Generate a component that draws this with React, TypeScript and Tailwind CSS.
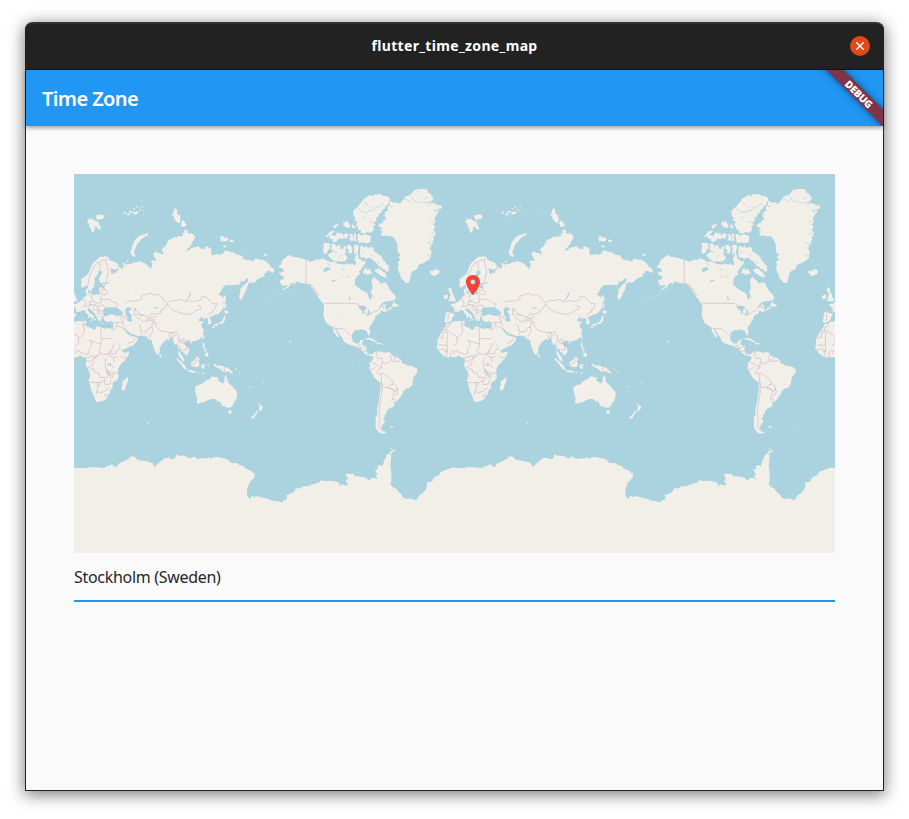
import React from "react";

const PERIOD = 1135;

function Eurasia() {
  return (
    <g>
      <path d="M-21 417L-14 414 -4 417 5 418 7 408 4 401 -2 396 -5 391 3 389 9 389 10 384 15 386 19 381 25 377 29 369 36 366 38 361 35 355 34 348 39 344 44 341 45 346 42 352 43 358 48 362 54 361 59 364 69 361 74 362 77 357 74 350 75 343 80 338 85 343 91 344 89 337 85 335 87 331 98 331 102 328 92 326 83 328 77 325 75 315 78 306 85 297 84 291 77 290 73 294 71 303 64 309 61 316 64 323 60 327 61 338 55 344 51 352 47 352 42 343 41 335 37 333 30 339 24 341 21 334 23 325 21 317 26 311 35 306 43 298 47 290 50 281 54 270 61 263 66 260 71 254 77 250 83 247 88 250 92 245 98 248 104 249 102 254 112 260 124 264 132 271 134 279 127 287 114 285 107 281 110 287 111 297 117 302 119 295 127 298 129 290 134 286 133 280 139 278 142 285 149 280 150 273 146 267 151 266 156 273 163 269 172 270 178 265 189 265 193 261 202 263 211 267 217 271 223 277 229 285 233 279 236 270 231 264 236 257 241 262 247 259 241 249 238 239 245 232 252 237 258 236 267 243 268 234 262 228 266 221 273 219 275 212 281 206 280 202 289 196 295 194 302 188 310 190 316 185 322 188 328 183 324 178 332 176 330 168 335 166 342 172 341 179 351 178 358 180 364 190 359 199 354 206 349 217 339 226 336 231 345 229 354 221 365 219 373 217 381 224 391 226 395 217 404 220 412 224 411 234 413 243 420 244 428 240 437 242 447 239 451 230 463 230 467 234 477 235 485 239 491 244 497 243 505 247 510 256 518 259 526 258 533 261 541 263 540 256 548 254 558 257 569 258 577 263 585 270 590 279 597 282 602 291 596 298 589 292 580 290 577 296 569 301 573 307 564 309 557 313 549 317 544 324 536 326 527 325 521 332 519 341 516 350 510 360 506 371 500 379 497 374 495 366 499 357 498 347 504 340 510 333 518 327 523 319 522 312 513 317 509 323 500 320 499 328 493 334 485 332 475 334 463 333 455 334 448 339 442 347 438 357 431 360 440 365 448 369 450 378 449 388 450 397 445 408 437 416 431 421 422 422 414 427 405 431 410 437 413 446 407 451 401 449 402 441 401 433 394 431 389 436 385 435 387 428 379 431 375 438 376 443 384 441 389 444 382 451 383 459 389 468 388 478 388 486 380 492 374 497 365 500 359 502 350 503 343 499 335 503 330 508 336 515 343 521 346 530 342 540 334 545 331 537 324 534 321 526 316 523 316 532 321 541 327 548 331 560 328 563 320 554 315 545 312 539 314 530 311 520 308 510 302 513 299 504 297 494 292 491 287 497 279 495 272 502 264 509 260 517 257 523 258 532 253 541 250 543 244 535 239 522 235 508 233 497 226 498 220 492 216 486 204 485 191 487 184 483 176 481 168 476 160 471 153 463 149 461 154 471 161 479 164 485 169 479 171 486 178 487 185 489 192 492 189 501 184 507 179 514 166 518 155 524 142 529 139 521 134 511 126 498 120 487 116 479 114 471 117 463 118 454 118 446 112 441 104 444 96 443 91 439 88 432 89 427 81 427 84 432 81 441 76 442 71 436 66 426 61 417 54 410 48 405 42 401 40 407 44 413 51 419 57 423 61 428 56 434 54 441 48 441 54 436 52 430 43 423 36 416 32 409 26 408 18 413 9 413 5 418 8 424 1 428 0 436 -5 443 -13 445 -18 448 -24 444 -22 432 -20 424z M89 426L98 424 105 421 115 420 125 424 140 425 148 419 143 411 131 403 124 400 110 400 93 401 87 408 89 416z" />
      <path d="M-11 381L-1 382 9 382 10 376 5 369 4 362 -1 354 -2 346 -6 339 -11 343 -11 351 -7 358 -5 364 -10 370 -7 375 -14 381zM-26 376L-15 374 -13 365 -17 361 -25 366zM58 436L67 434 65 440zM82 447L91 448 84 450zM42 423L46 422 47 431 42 432zM109 448L116 446 113 450zM46 357L52 355 53 361 48 362zM-52 0" />
      <path d="M40 140L49 131 52 138 57 133 60 141 64 139 70 145 71 137 65 128 68 122 77 123 83 120 91 127 87 134 77 136 71 140 75 150 81 163 78 167 70 163 66 155 63 160 61 170 57 178 52 170 50 163 45 158 47 150 40 146zM149 112L157 116 151 121zM158 119L166 117 168 122 161 125zM165 110L175 111 174 116 166 116zM177 112L185 115 190 110 193 116 185 122 177 120zM186 96L193 99 189 103zM195 104L202 109 198 112zM176 104L183 102 184 107zM200 98L206 97 205 101zM206 107L210 108 209 112zM170 124L176 126 173 129z" />
      <path d="M220 176L223 182 213 188 203 194 197 203 190 209 186 219 182 229 180 238 184 244 185 249 177 247 169 239 170 232 173 225 176 213 180 203 188 193 194 187 203 183 213 181zM300 106L306 103 310 111 309 119 317 124 319 134 318 145 314 148 306 142 301 134 299 127 294 124 298 117zM327 138L333 146 338 154 330 159 321 158 323 151 320 147zM439 187L447 186 450 191 460 190 462 198 455 203 447 200 440 204zM466 196L478 199 480 203 468 204zM449 212L457 216 455 221 448 218zM568 240L578 240 581 244 572 246zM158 260L163 260 163 265 158 265zM145 270L148 266 148 275zM105 123L110 122 110 125zM253 110L257 110 257 113z" />
      <path d="M450 364L455 365 456 377 452 386 458 394 454 399 456 405 450 401 451 390 449 378zM450 411L459 409 464 414 459 420 452 417zM452 422L454 433 451 443 444 449 435 450 428 455 420 457 419 452 428 449 438 446 445 440 448 431zM414 457L420 456 422 461 417 464zM424 453L430 452 428 457zM386 485L391 484 389 496 385 492zM348 504L355 504 352 510zM257 537L262 544 261 550 256 547z" />
      <path d="M385 508L391 507 391 519 399 528 395 530 387 521zM393 539L402 534 404 547 398 549 392 544zM388 527L394 532 394 538zM304 550L312 554 322 563 332 573 339 584 336 588 328 582 319 569 310 559zM339 588L350 588 363 591 369 595 356 596 342 592zM349 566L357 562 364 555 371 547 378 556 373 562 377 569 373 579 364 579 353 576zM381 573L390 571 397 570 389 575 394 585 389 581 387 587 383 582zM417 571L425 569 429 576 437 574 449 577 462 582 469 588 479 598 471 598 461 592 451 595 444 592 439 585 426 580zM369 595L378 595 375 598zM383 596L394 594 387 600zM402 569L405 572 403 578zM483 582L489 586 485 588zM492 590L500 595 497 596zM523 633L533 641 530 643zM565 625L572 620 568 627zM648 505L652 507 650 508z" />
    </g>
  );
}

function Africa() {
  return (
    <g>
      <path d="M-18 449L-9 449 0 444 14 441 24 442 36 440 37 447 35 453 41 459 50 461 58 467 65 465 67 458 75 457 83 462 95 464 105 462 113 464 117 470 114 474 119 484 125 496 131 508 136 518 143 528 146 534 155 536 165 532 165 540 159 551 151 561 142 569 135 578 131 589 133 601 133 611 129 619 120 623 115 630 117 640 109 649 107 658 100 669 94 677 85 681 75 683 66 684 63 676 59 663 53 653 50 640 46 628 43 622 47 610 49 602 45 592 40 583 35 575 37 562 36 550 28 551 18 544 12 549 3 550 -6 549 -15 551 -25 546 -34 539 -40 530 -47 521 -44 511 -45 500 -42 490 -35 480 -29 467 -21 459z" />
      <path d="M160 608L163 619 158 630 153 647 145 650 142 641 146 632 144 623 153 617z" />
    </g>
  );
}

function Oceania() {
  return (
    <path d="M364 638L373 633 385 630 390 624 400 617 407 616 411 609 419 607 426 610 434 610 432 619 439 624 446 629 451 622 451 611 454 602 459 612 462 625 467 630 474 636 481 644 488 652 490 663 487 676 480 687 474 698 464 702 454 698 445 697 440 687 437 682 431 683 425 676 416 674 403 678 392 684 379 686 371 689 368 685 370 674 366 661 363 651zM463 709L472 710 473 716 469 721 463 717zM553 686L559 692 567 699 563 708 558 712 554 708 557 700zM549 709L552 715 545 723 541 731 534 735 530 731 540 722 546 715zM221 744L226 745 225 749 221 748z" />
  );
}

function NorthAmerica() {
  return (
    <g transform="translate(570 0)">
      <path d="M45 296L53 294 62 291 56 288 57 283 47 282 43 276 49 272 53 271 51 266 56 257 64 252 69 246 78 243 84 248 91 248 97 250 107 252 117 255 127 257 136 261 139 265 145 260 152 261 155 256 163 258 170 255 176 251 179 256 187 257 191 262 200 264 208 262 216 266 225 271 233 270 241 272 248 268 258 272 265 268 269 274 274 272 276 264 271 257 276 244 280 239 284 246 284 254 292 257 296 264 303 259 305 267 298 276 291 286 285 293 289 300 279 306 273 318 273 333 282 340 293 349 304 354 311 358 314 368 317 377 323 372 323 362 320 353 325 346 326 336 322 326 325 313 334 313 344 320 350 329 358 326 366 325 372 336 378 348 386 357 394 365 396 373 391 379 380 381 369 382 358 385 351 392 344 400 350 398 358 391 365 392 363 400 368 405 364 411 374 405 378 399 385 402 380 406 369 411 361 415 351 409 349 417 340 423 334 427 333 436 326 443 325 449 319 455 315 461 318 469 318 478 315 486 311 480 308 471 299 468 293 466 284 469 276 468 268 474 264 482 263 492 266 501 274 508 282 509 287 505 290 498 299 497 295 505 294 512 303 515 308 519 306 528 310 537 317 541 326 540 331 540 326 547 317 545 309 544 301 538 295 531 289 525 280 521 272 515 261 513 252 510 242 505 237 498 235 491 228 484 223 475 217 466 213 464 218 473 223 482 225 491 219 488 214 479 208 473 209 466 203 458 195 452 187 447 183 438 179 428 178 417 180 406 180 394 176 387 171 380 164 372 158 361 152 355 149 347 143 340 135 332 124 329 114 327 104 325 99 322 91 331 86 335 90 326 81 328 75 338 66 344 58 348 52 350 62 342 72 335 65 333 56 336 50 330 47 320 58 315 61 308 50 304z" />
      <path d="M342 155L350 148 358 146 356 140 364 138 365 129 357 125 366 122 360 117 368 112 372 107 370 99 377 93 376 85 381 80 387 86 397 85 406 89 411 86 417 76 423 77 421 70 428 66 437 63 443 60 447 52 457 46 467 46 475 45 486 46 492 50 491 56 501 59 502 65 508 70 508 75 501 82 494 86 505 84 509 90 516 88 521 95 529 93 535 99 530 105 524 105 524 114 519 120 514 128 511 138 515 143 508 151 514 160 508 168 514 175 513 184 507 190 511 198 505 203 506 213 497 209 503 218 495 222 502 230 501 242 500 251 493 258 485 263 477 268 468 270 462 275 462 282 455 288 446 291 441 299 439 309 436 320 433 328 425 327 418 319 411 313 409 303 404 293 401 282 404 271 401 263 409 258 404 249 410 240 402 236 400 226 401 213 397 203 392 194 385 187 373 187 363 184 355 186 350 178 358 173 347 169 356 164 349 160z" />
      <path d="M268 108L274 105 276 101 283 98 287 89 295 82 299 74 309 69 316 63 327 66 333 60 341 62 349 59 358 66 367 66 374 69 379 77 374 84 372 92 365 95 363 103 354 108 354 115 345 119 344 127 336 132 338 140 330 145 335 153 327 156 330 164 325 174 317 176 310 173 302 179 290 176 291 167 283 168 281 158 275 152 281 144 272 139 274 131 268 125zM280 180L287 180 292 185 305 181 320 186 320 204 308 208 297 205 285 207 281 199zM184 188L192 181 196 174 205 170 213 170 207 177 198 183 190 189zM207 156L216 151 225 151 218 158 211 164zM195 187L201 181 210 187 216 182 221 173 228 179 233 176 236 183 242 190 235 196 226 193 220 200 213 205 205 201 207 196 198 194zM238 141L246 146 248 138 256 150 259 158 253 162 245 160 238 152zM263 150L272 155 274 163 265 163zM239 181L248 178 253 183 250 192 245 195 240 189zM255 181L261 179 267 186 268 200 260 200 255 194 260 189zM269 178L275 179 276 202 270 201z" />
      <path d="M178 207L191 207 200 210 196 216 201 221 193 227 191 235 182 241 177 232 179 220zM201 211L210 208 217 217 225 213 231 218 228 223 237 226 240 215 246 218 244 229 247 235 241 240 249 246 250 255 242 260 248 264 240 262 232 263 225 262 214 263 205 257 196 250 191 242 200 237 208 231 200 227 204 221zM249 214L257 212 264 218 265 231 261 239 252 236 255 229 249 224zM269 213L283 212 284 222 281 232 281 243 275 238 270 243 271 230zM289 217L296 215 301 221 307 216 313 223 320 218 328 221 330 233 338 235 341 241 349 244 356 252 355 258 363 262 367 270 375 276 373 284 376 288 368 295 363 287 355 284 347 275 344 279 351 287 358 293 365 299 369 311 360 309 350 305 341 298 335 293 331 288 341 284 346 282 341 272 334 264 327 259 321 253 313 251 306 255 298 250 290 252 288 239zM299 288L306 281 311 289 316 284 321 292 325 301 318 299 310 304 304 297 297 302zM327 309L334 307 332 313z" />
      <path d="M498 290L507 292 512 287 521 286 528 293 523 300 511 306 502 303 502 297 496 296zM383 397L387 388 392 381 393 389 401 391 404 399 394 397 388 400zM302 496L312 491 323 493 335 500 343 505 335 505 324 500 315 497zM338 507L349 506 353 510 340 511zM321 510L326 510 324 513zM354 509L361 510 357 512zM76 498L81 503 79 507 76 504zM155 354L161 358 164 366 157 361zM149 342L153 350 149 347z" />
      <path d="M79 344q-25 22-79 32" fill="none" stroke="#d8e3df" strokeWidth="2" strokeDasharray="7 5" />
    </g>
  );
}

function SouthAmerica() {
  return (
    <path
      transform="translate(570 438)"
      d="M318 107L327 101 331 97 338 94 342 96 345 93 353 96 364 98 374 96 380 99 385 107 393 110 402 113 409 116 413 123 414 130 422 132 431 137 441 137 450 141 458 145 461 153 457 162 449 170 447 179 446 189 443 198 436 204 426 206 419 212 416 221 410 229 404 238 398 245 389 246 391 256 386 262 375 264 373 271 366 273 368 280 362 286 362 293 356 297 363 303 359 311 354 317 352 325 358 332 367 338 358 341 347 339 337 328 334 316 336 302 334 293 340 281 339 266 343 253 345 240 346 227 349 215 349 201 349 188 340 181 331 173 325 162 320 152 315 145 318 137 316 130 323 124 328 116 325 104z M378 320L386 318 389 322 381 324zM453 332L458 335 456 337zM282 129L286 130 284 133z"
    />
  );
}

function Antarctica() {
  return (
    <g>
      <path d="M-4 881L5 881 16 883 28 882 41 881 50 878 57 880 68 880 80 882 92 881 99 876 107 875 111 871 118 873 118 877 128 880 131 873 136 868 145 864 156 859 162 854 166 855 166 849 174 847 184 849 187 855 195 859 205 860 216 861 226 864 235 868 241 879 247 874 255 866 262 861 268 855 276 852 285 851 293 856 304 853 305 844 308 841 313 845 320 845 332 845 342 851 351 853 360 847 364 850 368 854 377 854 390 853 401 853 405 850 411 855 417 850 431 849 443 852 454 854 463 857 468 865 479 868 489 867 496 873 508 876 513 882 524 888 532 890 536 896 543 898 541 910 534 918 526 926 522 939 519 947 519 963 524 972 531 974 531 966 541 968 551 967 563 970 574 973 584 975 595 980 608 981 624 985 631 979 640 974 644 963 651 963 661 962 667 965 674 945 683 940 692 936 702 937 711 932 726 928 737 925 741 916 744 920 755 921 762 920 778 922 792 925 798 933 801 938 802 931 811 933 820 936 820 927 815 921 822 913 815 905 817 899 828 900 840 899 841 907 853 907 866 909 877 911 884 920 893 912 903 912 912 917 907 910 904 904 911 903 908 896 904 889 913 884 909 878 917 873 925 877 929 866 930 857 935 854 936 845 944 839 950 837 947 844 952 841 951 858 949 876 951 889 952 902 952 919 949 931 956 939 967 944 973 953 981 960 988 971 998 975 1011 973 1019 977 1028 978 1035 965 1045 958 1055 948 1059 937 1059 925 1068 924 1076 921 1078 912 1088 906 1095 904 1101 893 1110 890 1122 885 1133 883 1139 881 1139 1142 -4 1142zM637 963L647 960 660 954 666 942 700 950 680 974 640 974z" />
      <path d="M945 836L955 829 967 827 957 833 950 839zM901 882L905 885 902 889zM948 825L959 820 953 826z" />
    </g>
  );
}

function InlandWater() {
  return (
    <g fill="#aad3df">
      <path d="M90 416L93 409 98 405 105 407 107 412 112 414 119 411 125 412 134 417 136 424 128 426 119 422 108 421 100 425 92 427 88 423zM118 405L128 402 131 405 124 408 123 412 118 409zM154 404L160 400 170 401 174 405 168 409 164 412 169 419 173 424 172 434 176 439 171 443 162 442 158 438 161 430 156 423 154 414z" />
      <path d="M180 403L185 402 186 408 182 409zM239 400L254 400 252 403 240 403zM334 377L342 371 349 355 352 357 347 369 338 378zM320 440L324 441 323 443zM98 326L105 323 105 329zM108 318L111 320 110 323zM159 358L164 358 163 360zM323 335L331 336 324 337zM100 570L112 567 110 573 102 575z" />
      <g transform="translate(570 0)">
        <path d="M177 289L183 282 192 279 200 284 197 289 190 290 185 295 179 292zM205 319L214 317 220 318 212 321 204 325 203 324zM281 398L290 395 302 396 310 403 303 406 300 418 295 424 296 411 290 407zM310 405L315 407 319 419 312 417 312 410zM306 422L318 418 319 421 308 425zM254 366L259 370 260 380 255 375zM216 423L219 426 216 427zM232 307L239 307 235 310z" />
        <g fill="none" stroke="#aad3df" strokeWidth="2">
          <path d="M282 104L296 114 308 116 317 110 327 110 335 99 348 97 360 86M300 84L312 93M318 103L326 96M332 149L324 143 316 144M295 134L303 127M377 97L386 99M426 75L440 84M441 67L450 80 462 85M468 82L479 87 493 84 506 88M490 70L482 76M459 51L466 58M502 85L492 97M524 106L510 110 519 114M507 144L499 144M509 177L499 181M500 208L489 206M498 247L488 243M207 232L219 236M232 243L223 249M292 239L301 233M319 240L328 247M340 264L349 269M408 243L399 247M190 268L201 275M231 285L240 290M322 364L330 368M247 306L258 311" />
        </g>
      </g>
    </g>
  );
}

function Borders() {
  return (
    <g fill="none" stroke="#c9afc4" strokeWidth="2.4" strokeOpacity=".7" strokeLinejoin="round">
      <path d="M42 334L44 317 48 303 55 291 59 278 68 266 76 264 84 257 93 259 99 255M77 265L78 280 77 289M95 257L97 270 102 282 102 298 99 313 94 325M73 347L85 350 92 346M77 337L90 337M91 332L93 347 100 355 97 361 87 362 82 356 74 356M81 362L80 374 90 377 106 375 114 383 128 387 131 396 125 402M52 363L52 376 59 383 73 388 81 386 81 374M29 373L35 387 34 396 25 399M35 398L45 394 54 392 64 393 70 399 79 394 91 395 98 407M44 385L59 380M48 385L50 396M63 392L58 401 62 407 71 413 74 428M71 399L75 409 88 412M68 403L78 417 87 420M-12 419L-13 442M1 418L18 422" />
      <path d="M152 389L158 383 173 381 189 381 202 376 203 366 221 360 230 357 240 364 253 361 262 367 269 379 279 386 285 383 298 379 312 381 318 375 330 381 342 382 350 379 358 383 370 381 382 377 384 367 399 370 408 381 416 390 428 388 424 403 419 405 417 414 410 417 402 425M280 388L285 398 295 407 313 415 330 420 346 421 358 416 369 408 380 404 382 397 369 394M180 424L181 408 189 410 200 421 209 424 219 430 226 427 232 419 245 421 260 417 261 408 270 406 280 390M208 424L200 424 191 420 181 424M187 429L196 435 208 444 215 440 221 435 230 434 238 429 248 428M196 450L201 474 219 472 223 463 234 458 235 446 246 446M215 443L227 439 243 442M226 430L239 438 243 434M243 444L248 460 258 470 278 474 288 476 299 474 311 473M198 478L204 484M234 458L236 473 228 485 226 495M118 447L132 445 147 445M132 444L128 456 118 471M130 456L142 460 153 464M143 426L141 433 146 440 148 452 153 459M145 425L158 429M147 431L156 435M286 476L296 477 297 490 288 492 284 480M299 488L307 478 314 485 315 498 322 500 330 495 339 501M316 499L310 511 315 518 318 530M322 499L322 507 331 507 339 519 336 528 326 528M328 499L340 518M163 508L178 503 182 493" />
      <path d="M122 507L108 538 114 540 126 539 131 527 140 524M-30 468L-18 468 -18 459 -8 456 -6 446M-43 492L-28 492 -28 474 -15 474M-18 466L14 489 14 492M-15 474L-16 514 -40 513M14 492L28 481 31 471 29 456 34 448M29 442L28 456M44 498L80 510 82 492 80 462M82 494L116 494M52 500L53 514 44 530 46 537 36 541 17 534 17 530 6 532 4 541M14 492L13 508 4 516M80 509L80 521 75 530 80 539 64 547 55 545 47 550M80 538L92 541 104 539 109 527M140 543L149 554 160 548M102 538L108 547 118 550 132 548M118 550L120 566M98 552L92 562 95 571 94 583 103 595 117 595M36 562L50 562 58 554 72 547M62 549L59 562 55 574 41 581M46 585L58 585 63 596 74 596 78 610 91 610 98 613 103 605 97 591M43 624L75 626 85 624 96 616M71 626L70 647 66 664M70 652L77 656 87 654 98 648 106 640M75 626L76 640M90 618L94 632 108 630 111 618M100 602L116 602 116 612M132 597L116 598M107 572L122 580M37 552L50 548M-17 551L-17 531 -25 525 -42 527M-6 550L-4 533 3 528M-24 533L-15 533 -15 515M91 665L96 660 100 664 95 669z" />
      <path d="M451 572L451 596M350 568L357 571 364 567 372 554" />
      <g transform="translate(570 0)">
        <path d="M126 258L126 328 134 332 141 331 147 341 153 345 158 358 166 366M180 388L271 388 283 391 289 397 303 400M303 416L315 423 330 413 342 409 349 399 357 396 360 405M203 458L215 464 233 464 242 466 249 476 262 484M281 522L281 514 290 514M293 518L285 523 293 524 305 516M296 532L307 531M309 538L316 544" />
      </g>
      <g transform="translate(570 438)">
        <path d="M339 95L336 106 341 115 353 115 357 124 352 131 353 143M325 129L337 132 344 139 351 139M319 148L327 148 335 140M354 128L364 132 375 127 382 118 378 109 383 105M382 117L386 125 392 124 392 111M392 124L404 124 409 117M354 143L346 146 339 155 343 162 353 161 352 170 352 187 357 202 367 202 375 201 380 194 388 193 387 183 378 176 374 171 363 163 354 159M353 187L353 201 354 216 349 241 346 266 345 286 348 297 345 318 357 336M375 203L382 207 391 213 390 222 385 232 385 242M371 203L385 206 391 213 399 212 400 201 393 193M398 205L402 215 394 229M386 235L398 242" />
      </g>
      <path d="M98 584L100 591 106 600 112 613" stroke="#8faed8" />
    </g>
  );
}

function WorldMap() {
  return (
    <svg className="block h-full w-full" viewBox="0 0 2283 1137" preserveAspectRatio="none" aria-hidden="true">
      <defs>
        <g id="world">
          <g fill="#f2efe9">
            <Eurasia />
            <Africa />
            <Oceania />
            <NorthAmerica />
            <SouthAmerica />
            <Antarctica />
          </g>
          <InlandWater />
          <Borders />
        </g>
      </defs>
      <use href="#world" />
      <use href="#world" x={PERIOD} />
      <use href="#world" x={PERIOD * 2} />
    </svg>
  );
}

function LocationPin() {
  return (
    <svg className="absolute top-[99px] left-[387px] h-6 w-6" viewBox="0 0 24 24" aria-hidden="true">
      <path
        fill="#f44336"
        d="M12 2C8.13 2 5 5.13 5 9c0 5.25 7 13 7 13s7-7.75 7-13c0-3.87-3.13-7-7-7zm0 9.5a2.5 2.5 0 0 1 0-5 2.5 2.5 0 0 1 0 5z"
      />
    </svg>
  );
}

function DebugBanner() {
  return (
    <div className="absolute top-0 right-0 h-14 w-[70px] overflow-hidden">
      <div className="absolute top-[18px] left-[-4px] flex h-3 w-[100px] rotate-45 items-center justify-center bg-[#7f3549] shadow-[0_0_6px_rgba(0,0,0,0.5)]">
        <span className="text-[10.2px] leading-3 font-black tracking-[-0.2px] text-white">DEBUG</span>
      </div>
    </div>
  );
}

export default function App() {
  return (
    <div className="h-[819px] w-[909px] overflow-hidden bg-white pt-[22px] pl-[25px] font-['Noto_Sans',sans-serif]">
      <div className="flex h-[769px] w-[859px] flex-col rounded-t-[8px] border border-t-0 border-[#222222] bg-[#fafafa] shadow-[0_3px_16px_1px_rgba(0,0,0,0.5)]">
        <header className="-mx-px flex h-12 shrink-0 items-center rounded-t-[8px] border-t-2 border-b border-t-[#323232] border-b-[#151515] bg-[#222222] pr-[14px] pb-px pl-[34px]">
          <h1 className="flex-1 text-center text-[14px] leading-5 font-bold tracking-[0.34px] text-white">
            flutter_time_zone_map
          </h1>
          <button aria-label="Close" className="flex h-5 w-5 items-center justify-center rounded-full bg-[#e04a18]">
            <svg className="h-2 w-2" viewBox="0 0 8 8" aria-hidden="true">
              <path d="M.2.2l7.6 7.6m0-7.6l-7.6 7.6" stroke="#fff" strokeWidth="1.4" />
            </svg>
          </button>
        </header>
        <div className="relative flex h-14 shrink-0 items-center bg-[#2196f3] px-4 pt-0.5 shadow-[0_2px_4px_rgba(0,0,0,0.35)]">
          <h2 className="text-[20px] leading-6 font-semibold tracking-[-0.6px] text-white">Time Zone</h2>
          <DebugBanner />
        </div>
        <main className="flex flex-col px-12 pt-12">
          <div className="relative h-[379px] w-full overflow-hidden bg-[#aad3df]">
            <WorldMap />
            <LocationPin />
          </div>
          <div className="flex h-[49px] items-center border-b-2 border-[#2196f3]">
            <span className="text-[16px] leading-5 tracking-[-0.3px] text-[#262626]">Stockholm (Sweden)</span>
          </div>
        </main>
      </div>
    </div>
  );
}
